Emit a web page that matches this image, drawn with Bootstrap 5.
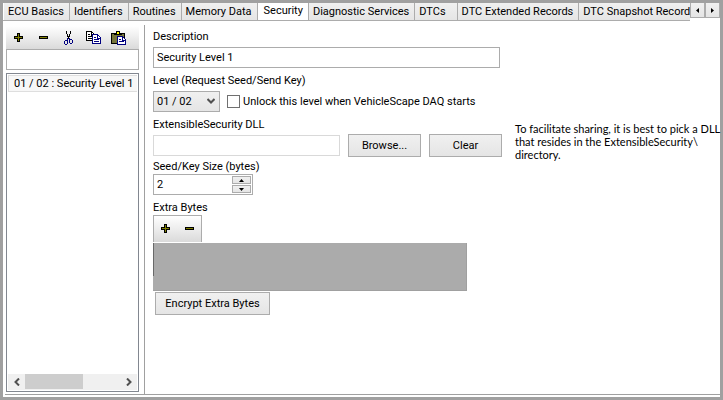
<!DOCTYPE html>
<html lang="en">
<head>
<meta charset="utf-8">
<meta name="viewport" content="width=device-width, initial-scale=1">
<title>ECU Security</title>
<link rel="stylesheet" href="https://cdn.jsdelivr.net/npm/bootstrap@5.3.0/dist/css/bootstrap.min.css">
<style>
  :root { --frame: #a0a0a0; --line: #acacac; --face: linear-gradient(#f0f0f0, #e5e5e5); }
  body { font: 11px/14px Tahoma, Roboto, sans-serif; color: #000; background: #fff; }
  .app { min-height: 100vh; border: 3px solid var(--frame); }
  .tabs { height: 18px; }
  .tabs .strip { min-width: 0; padding-left: 1px; border-bottom: 1px solid var(--line); }
  .tab { padding: 1px 5px 0 4px; border: 0; border-right: 1px solid var(--line); background: var(--face); white-space: nowrap; flex: none; color: #000; text-align: left; }
  .tab.active { background: #fff; margin-bottom: -1px; padding: 0 5px 3px 6px; }
  .tab.brief { padding-right: 11px; }
  .pager { width: 15px; border: 1px solid var(--line); border-top: 0; background: var(--face); padding: 0; margin-bottom: 3px; }
  .workspace { margin: 4px 0 2px 2px; border-bottom: 1px solid var(--frame); }
  .sidebar { width: 140px; padding: 1px 5px 2px 1px; border-right: 1px solid var(--frame); }
  .tools { height: 23px; background: linear-gradient(#fff, #dadada); }
  .tool { border: 0; background: none; padding: 0; width: 25px; height: 23px; }
  .tool svg, .pager svg, .step svg, .arrow svg { display: block; margin: auto; }
  .field { height: 21px; border: 1px solid var(--line); border-radius: 0; padding: 0 3px; background: #fff; color: #000; min-width: 0; }
  .field:disabled { border-color: #d9d9d9; }
  .tree { margin-top: 3px; border: 1px solid #828790; padding: 1px; }
  .entry { height: 17px; padding: 0 5px; border: 1px solid #dedede; border-right: 0; background: #f7f7f7; white-space: nowrap; text-align: left; color: #000; line-height: 15px; }
  .scroll { height: 16px; background: #f0f0f0; }
  .arrow { width: 17px; border: 0; padding: 0; background: none; }
  .thumb { width: 58px; height: 15px; background: #cdcdcd; }
  .pane { padding: 5px 0 0 8px; min-width: 0; }
  .wide { width: 347px; }
  .level { width: 67px; height: 21px; border: 1px solid var(--line); background: var(--face); padding: 0 3px; appearance: none; color: #000; }
  .level-box { position: relative; }
  .level-box svg { position: absolute; right: 5px; top: 7px; pointer-events: none; }
  .tick { appearance: none; width: 13px; height: 13px; border: 1px solid #707070; background: #fff; margin: 0 3px 0 7px; }
  .tick:checked { background: #404040; }
  .push { height: 23px; border: 1px solid var(--line); background: var(--face); padding: 0; color: #000; }
  .pick { width: 73px; }
  .encrypt { width: 115px; margin: 1px 0 0 2px; }
  .dll { width: 187px; }
  .hint { font-family: Tahoma, Lato, sans-serif; line-height: 13px; margin: 4px 0 0 13px; white-space: nowrap; }
  .spin { width: 100px; height: 21px; border: 1px solid var(--line); padding: 1px; }
  .spin input { border: 0; padding: 0 2px; min-width: 0; width: 76px; color: #000; }
  .step { width: 19px; height: 8px; border: 1px solid var(--line); background: var(--face); padding: 0; }
  .mini { width: 49px; height: 27px; border: 1px solid var(--line); border-bottom: 0; background: linear-gradient(#fff, #dadada); gap: 1px; }
  .mini .tool { width: 23px; height: 25px; }
  .grid-area { width: 314px; height: 48px; margin-top: 1px; background: linear-gradient(#696969, #696969) 0 0/1px 33px no-repeat #ababab; border-right: 1px solid var(--frame); border-bottom: 1px solid var(--frame); }
  .gap-a { margin-bottom: 3px; }
  .gap-b { margin-bottom: 6px; }
  .gap-c { margin-bottom: 4px; }
</style>
</head>
<body>
<svg width="0" height="0" class="position-absolute" aria-hidden="true">
  <symbol id="plus" viewBox="0 0 9 9"><path d="M3 0h3v3h3v3H6v3H3V6H0V3h3z"/><path fill="#808000" d="M4 1h1v3h3v1H5v3H4V5H1V4h3z"/></symbol>
  <symbol id="minus" viewBox="0 0 9 3"><path d="M0 0h9v3H0z"/><path fill="#808000" d="M1 1h7v1H1z"/></symbol>
</svg>
<div class="app d-flex flex-column">
  <div class="tabs d-flex" role="tablist">
    <div class="strip d-flex flex-fill overflow-hidden">
      <button class="tab" role="tab">ECU Basics</button>
      <button class="tab" role="tab">Identifiers</button>
      <button class="tab" role="tab">Routines</button>
      <button class="tab" role="tab">Memory Data</button>
      <button class="tab active" role="tab" aria-selected="true">Security</button>
      <button class="tab" role="tab">Diagnostic Services</button>
      <button class="tab brief" role="tab">DTCs</button>
      <button class="tab" role="tab">DTC Extended Records</button>
      <button class="tab" role="tab">DTC Snapshot Records</button>
    </div>
    <button class="pager" aria-label="Previous tabs"><svg width="3" height="5"><path d="M3 0v5L0 2.500z"/></svg></button>
    <button class="pager" aria-label="Next tabs"><svg width="3" height="5"><path d="M0 0v5l3-2.500z"/></svg></button>
  </div>

  <div class="workspace d-flex flex-fill">
    <div class="sidebar d-flex flex-column flex-shrink-0">
      <div class="tools d-flex">
        <button class="tool" aria-label="Add"><svg width="9" height="9"><use href="#plus"/></svg></button>
        <button class="tool" aria-label="Remove"><svg width="9" height="3"><use href="#minus"/></svg></button>
        <button class="tool" aria-label="Cut"><svg width="9" height="14" fill="none" shape-rendering="crispEdges"><path stroke="#000" d="M2.500 0v3M3.500 3v3M6.500 0v3M5.500 3v3M4.500 5v3"/><path stroke="#000080" d="M3.500 7v6M5.500 7v5M1 9.500h2M.5 10v3M1 13.500h2M6 8.500h2M8.500 9v3M6 12.500h2"/></svg></button>
        <button class="tool" aria-label="Copy"><svg width="16" height="14" shape-rendering="crispEdges"><path fill="#fff" stroke="#000" d="M.5.500h5l3 3v6h-8z"/><path stroke="#000" fill="none" d="M5.500 1v3h3M2 3.500h2M2 5.500h5M2 7.500h5"/><path fill="#fff" stroke="#000080" d="M6.500 3.500h5l3 3v6h-8z"/><path stroke="#000080" fill="none" d="M11.500 4v3h3M8 6.500h2M8 8.500h5M8 10.500h5"/></svg></button>
        <button class="tool" aria-label="Paste"><svg width="16" height="14" shape-rendering="crispEdges"><path fill="#75753a" stroke="#000" d="M.5 2.500h13v10H.5z"/><path fill="#ff0" stroke="#000" d="M3.500 3.500v-1h2v-2h3v2h2v1z"/><path fill="#fff" stroke="#000080" d="M6.500 5.500h5l3 3v5h-8z"/><path stroke="#000080" fill="none" d="M11.500 6v3h3M8 8.500h2M8 10.500h5"/></svg></button>
      </div>
      <input class="field w-100" type="text" aria-label="Filter levels">
      <div class="tree d-flex flex-column flex-fill">
        <button class="entry">01 / 02 : Security Level 1</button>
        <div class="scroll d-flex mt-auto">
          <button class="arrow" aria-label="Scroll left"><svg width="6" height="8" fill="none" stroke="#505050" stroke-width="2"><path d="M5 0.500 1.500 4 5 7.500"/></svg></button>
          <div class="thumb"></div>
          <button class="arrow ms-auto" aria-label="Scroll right"><svg width="6" height="8" fill="none" stroke="#505050" stroke-width="2"><path d="M1 0.500 4.500 4 1 7.500"/></svg></button>
        </div>
      </div>
    </div>

    <form class="pane flex-fill d-flex flex-column align-items-start">
      <label class="gap-a" for="desc">Description</label>
      <input class="field wide gap-b" id="desc" type="text" value="Security Level 1">
      <label class="gap-a" for="level">Level (Request Seed/Send Key)</label>
      <div class="d-flex align-items-center gap-b">
        <div class="level-box d-flex">
          <select class="level" id="level"><option>01 / 02</option></select>
          <svg width="8" height="7" fill="none" stroke="#505050" stroke-width="2"><path d="M.5 1 4 4.500 7.500 1"/></svg>
        </div>
        <input class="tick" type="checkbox" id="unlock">
        <label for="unlock">Unlock this level when VehicleScape DAQ starts</label>
      </div>
      <div class="d-flex">
        <div class="d-flex flex-column dll flex-shrink-0">
          <label class="gap-a" for="dll">ExtensibleSecurity DLL</label>
          <input class="field gap-c" id="dll" type="text" disabled>
          <label for="size">Seed/Key Size (bytes)</label>
        </div>
        <div class="d-flex align-items-start ms-2 mt-3 flex-shrink-0">
          <button class="push pick me-2" type="button">Browse...</button>
          <button class="push pick" type="button">Clear</button>
        </div>
        <div class="hint">To facilitate sharing, it is best to pick a DLL<br>that resides in the ExtensibleSecurity\<br>directory.</div>
      </div>
      <div class="spin d-flex gap-b">
        <input class="flex-fill" id="size" type="text" value="2">
        <div class="d-flex flex-column justify-content-between">
          <button class="step" type="button" aria-label="Increase"><svg width="5" height="3"><path d="M0 3h5L2.500 0z"/></svg></button>
          <button class="step" type="button" aria-label="Decrease"><svg width="5" height="3"><path d="M0 0h5L2.500 3z"/></svg></button>
        </div>
      </div>
      <div>Extra Bytes</div>
      <div class="mini d-flex">
        <button class="tool" type="button" aria-label="Add byte"><svg width="9" height="9"><use href="#plus"/></svg></button>
        <button class="tool" type="button" aria-label="Remove byte"><svg width="9" height="3"><use href="#minus"/></svg></button>
      </div>
      <div class="grid-area"></div>
      <button class="push encrypt" type="button">Encrypt Extra Bytes</button>
    </form>
  </div>
</div>
<script src="https://cdn.jsdelivr.net/npm/bootstrap@5.3.0/dist/js/bootstrap.bundle.min.js"></script>
</body>
</html>
